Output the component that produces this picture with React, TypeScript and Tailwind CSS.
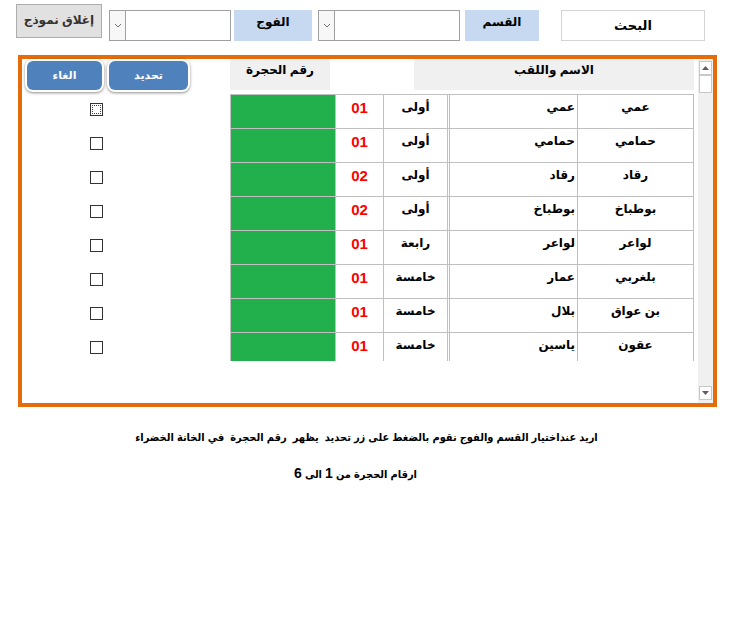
import React from "react";

const rows = [
  { first: "عمي", last: "عمي", level: "أولى", room: "01" },
  { first: "حمامي", last: "حمامي", level: "أولى", room: "01" },
  { first: "رقاد", last: "رقاد", level: "أولى", room: "02" },
  { first: "بوطباخ", last: "بوطباخ", level: "أولى", room: "02" },
  { first: "لواعر", last: "لواعر", level: "رابعة", room: "01" },
  { first: "بلغربي", last: "عمار", level: "خامسة", room: "01" },
  { first: "بن عواق", last: "بلال", level: "خامسة", room: "01" },
  { first: "عقون", last: "ياسين", level: "خامسة", room: "01" },
];

function Combo({ width }: { width: string }) {
  return (
    <div className={`${width} h-[31px] border border-[#a0a0a0] bg-white flex`}>
      <div className="w-[16px] h-full border-r border-[#a0a0a0] bg-[#f7f7f7] flex items-center justify-center">
        <svg width="8" height="5" viewBox="0 0 8 5">
          <path d="M1 1 L4 4 L7 1" fill="none" stroke="#707070" strokeWidth="1" />
        </svg>
      </div>
    </div>
  );
}

function Label({ text, width }: { text: string; width: string }) {
  return (
    <div className={`${width} h-[31px] bg-[#c6d9f0] flex justify-center pt-[4px] text-[12px] font-bold leading-[16px] text-black`}>
      {text}
    </div>
  );
}

function BlueButton({ text, width }: { text: string; width: string }) {
  return (
    <div className="rounded-[8px] bg-white p-[2px] shadow-[0_1px_3px_rgba(0,0,0,0.45)]">
      <div className={`${width} h-[29px] rounded-[6px] bg-[#4f81bd] flex justify-center pt-[7px] text-[11px] font-bold leading-[14px] text-white`}>
        {text}
      </div>
    </div>
  );
}

function ScrollArrow({ up }: { up: boolean }) {
  return (
    <div className="mx-[1px] h-[14px] bg-white border border-[#c8c8c8] flex items-center justify-center">
      <svg width="7" height="4" viewBox="0 0 7 4">
        <path d={up ? "M0 4 L3.5 0 L7 4 Z" : "M0 0 L3.5 4 L7 0 Z"} fill="#6a5868" />
      </svg>
    </div>
  );
}

export default function App() {
  return (
    <div className="w-[733px] h-[617px] bg-white font-['Liberation_Sans','DejaVu_Sans',sans-serif] text-black">
      {/* top bar */}
      <div className="h-[55px] pt-[4px] pl-[16px] flex items-start">
        <div className="w-[86px] h-[34px] bg-[#e1e1e1] border border-[#adadad] flex justify-center pt-[7px] text-[12px] font-bold leading-[16px] text-[#333]">
          إغلاق نموذج
        </div>
        <div className="ml-[7px] mt-[6px]">
          <Combo width="w-[122px]" />
        </div>
        <div className="ml-[3px] mt-[6px]">
          <Label text="الفوج" width="w-[78px]" />
        </div>
        <div className="ml-[6px] mt-[6px]">
          <Combo width="w-[142px]" />
        </div>
        <div className="ml-[5px] mt-[6px]">
          <Label text="القسم" width="w-[74px]" />
        </div>
        <div className="ml-[22px] mt-[6px] w-[144px] h-[31px] border border-[#d4d4d4] flex items-center justify-center text-[13px] font-bold">
          البحث
        </div>
      </div>

      {/* framed grid */}
      <div className="ml-[18px] w-[699px] h-[352px] border-4 border-[#e46c0a] flex">
        <div className="w-[672px] flex flex-col">
          <div className="h-[35px] flex items-start">
            <div className="w-[208px] flex gap-[3px] pl-[3px]">
              <BlueButton text="الغاء" width="w-[75px]" />
              <BlueButton text="تحديد" width="w-[79px]" />
            </div>
            <div className="w-[100px] h-[31px] bg-[#f0f0f0] flex justify-center pt-[3px] text-[12px] font-bold leading-[16px]">
              رقم الحجرة
            </div>
            <div className="w-[84px]" />
            <div className="w-[280px] h-[31px] bg-[#f0f0f0] flex justify-center pt-[3px] text-[12px] font-bold leading-[16px]">
              الاسم واللقب
            </div>
          </div>
          <div className="h-[267px] overflow-hidden">
            {rows.map((r, i) => (
              <div key={i} className="h-[34px] flex text-[12px] font-bold leading-[16px]">
                <div className="w-[208px] pl-[68px] pt-[9px]">
                  <div className="w-[13px] h-[13px] border border-[#333] p-[1px]">
                    {i === 0 && <div className="w-full h-full border border-dotted border-[#444]" />}
                  </div>
                </div>
                <div className="w-[105px] border-l border-t border-[#c0c0c0] bg-[#22b04c]" />
                <div className="w-[48px] border-l border-t border-[#c0c0c0] flex justify-center pt-[4px] text-[15px] leading-[18px] text-[#ff0000]">
                  {r.room}
                </div>
                <div className="w-[64px] border-l border-t border-[#c0c0c0] flex justify-center pt-[4px]">
                  {r.level}
                </div>
                <div className="w-[2px] border-l border-t border-[#c0c0c0]" />
                <div className="w-[128px] border-l border-t border-[#c0c0c0] flex justify-end pr-[2px] pt-[4px]">
                  {r.last}
                </div>
                <div className="w-[117px] border-l border-r border-t border-[#c0c0c0] flex justify-center pt-[4px]">
                  {r.first}
                </div>
              </div>
            ))}
          </div>
        </div>
        <div className="w-[4px]" />
        <div className="w-[15px] bg-[#f0f0f0] flex flex-col pt-[2px] pb-[3px]">
          <ScrollArrow up />
          <div className="mx-[1px] h-[18px] bg-white border border-[#c8c8c8]" />
          <div className="flex-1" />
          <ScrollArrow up={false} />
        </div>
      </div>

      {/* notes */}
      <div dir="rtl" className="mt-[22px] text-center font-['Liberation_Sans','DejaVu_Sans_Condensed','DejaVu_Sans',sans-serif] text-[11px] font-bold leading-[16px]">
        اريد عنداختيار القسم والفوج نقوم بالضغط على زر تحديد&nbsp; يظهر&nbsp; رقم الحجرة&nbsp; في الخانة الخضراء
      </div>
      <div dir="rtl" className="mt-[20px] text-center font-['Liberation_Sans','DejaVu_Sans_Condensed','DejaVu_Sans',sans-serif] text-[11px] font-bold leading-[16px] pr-[22px]">
        ارقام الحجرة من <span className="text-[14px]">1</span> الى <span className="text-[14px]">6</span>
      </div>
    </div>
  );
}
